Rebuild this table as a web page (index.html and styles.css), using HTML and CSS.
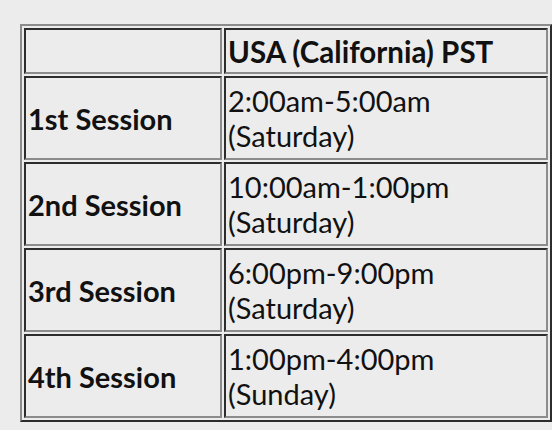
FILE: index.html
```html
<!DOCTYPE html>
<html>
<head>
<meta charset="utf-8">
<link rel="stylesheet" href="styles.css">
</head>
<body>
<table class="schedule">
  <tr class="head-row">
    <td class="label"></td>
    <td class="time head">USA (California) PST</td>
  </tr>
  <tr class="row">
    <td class="label">1st Session</td>
    <td class="time">2:00am-5:00am<br>(Saturday)</td>
  </tr>
  <tr class="row">
    <td class="label">2nd Session</td>
    <td class="time">10:00am-1:00pm<br>(Saturday)</td>
  </tr>
  <tr class="row">
    <td class="label">3rd Session</td>
    <td class="time">6:00pm-9:00pm<br>(Saturday)</td>
  </tr>
  <tr class="row">
    <td class="label">4th Session</td>
    <td class="time">1:00pm-4:00pm<br>(Sunday)</td>
  </tr>
</table>
</body>
</html>
```
FILE: styles.css
```css
html, body {
  margin: 0;
  padding: 0;
  background: #ececec;
}
body {
  padding: 24px 0 0 20px;
  font-family: "Lato", "Liberation Sans", sans-serif;
  color: #111;
}
.schedule {
  border-collapse: separate;
  border-spacing: 2px;
  border-style: solid;
  border-width: 2px;
  border-color: #8c8c8c #2c2c2c #2c2c2c #8c8c8c;
  width: 532px;
  table-layout: fixed;
}
.schedule td {
  border-style: solid;
  border-width: 2px;
  border-color: #2c2c2c #8c8c8c #8c8c8c #2c2c2c;
  padding: 0 2px;
  vertical-align: middle;
  font-size: 29px;
  line-height: 35px;
}
.label {
  width: 190px;
  font-weight: 700;
  font-size: 27px;
}
.time.head {
  font-weight: 700;
  font-size: 29.5px;
}
.head-row td {
  height: 42px;
}
.row td {
  height: 80px;
}
```
